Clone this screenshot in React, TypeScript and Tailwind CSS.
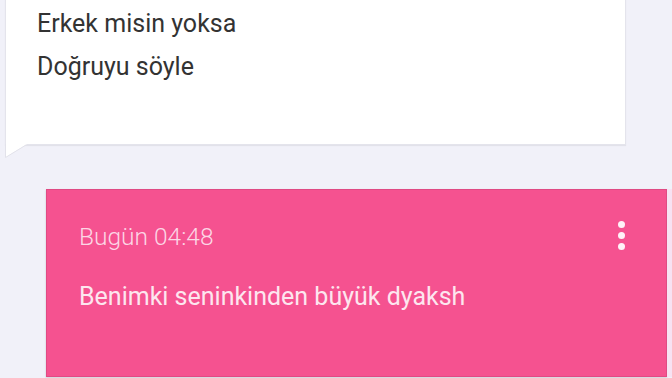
import React from 'react';

const App = () => {
  return (
    <div className="w-[672px] h-[378px] overflow-hidden bg-[#f1f1f9] font-['Roboto',sans-serif]">
      <div className="relative ml-[5px] w-[621px] h-[146px] -mt-[1px] bg-white border border-[#e4e4ec] shadow-[0_1px_1px_rgba(0,0,0,0.06)]">
        <div className="pl-[31px] pt-[2px] text-[25px] leading-[43px] text-[#333333]">
          <div>Erkek misin yoksa</div>
          <div>Doğruyu söyle</div>
        </div>
        <svg
          className="absolute left-[-1px] top-[144px]"
          width="24"
          height="15"
          viewBox="0 0 24 15"
        >
          <polygon points="0,0 22,0 1,13 1,0" fill="#ffffff" />
          <polyline points="0.5,0 0.5,13.5 21,1" fill="none" stroke="#e2e2ea" strokeWidth="1" />
        </svg>
      </div>

      <div className="flex">
        <div className="mt-[44px] ml-[46px] w-[621px] h-[188px] flex justify-between bg-[#f55290] border border-[#e04a84] shadow-[0_1px_2px_rgba(0,0,0,0.15)]">
          <div className="pl-[32px]">
            <div className="pt-[32px] text-[24.5px] leading-[30px] font-light text-[#fcd6e5]">
              Bugün 04:48
            </div>
            <div className="mt-[30px] text-[25px] leading-[30px] text-[#fde6ef]">
              Benimki seninkinden büyük dyaksh
            </div>
          </div>
          <div className="pr-[41px] pt-[31px] flex flex-col gap-[4px]">
            <span className="w-[7px] h-[7px] rounded-full bg-[#fff2f7]" />
            <span className="w-[7px] h-[7px] rounded-full bg-[#fff2f7]" />
            <span className="w-[7px] h-[7px] rounded-full bg-[#fff2f7]" />
          </div>
        </div>
        <div className="mt-[44px] w-[5px] h-[188px] bg-[#f7e2f3]" />
      </div>
    </div>
  );
};

export default App;
